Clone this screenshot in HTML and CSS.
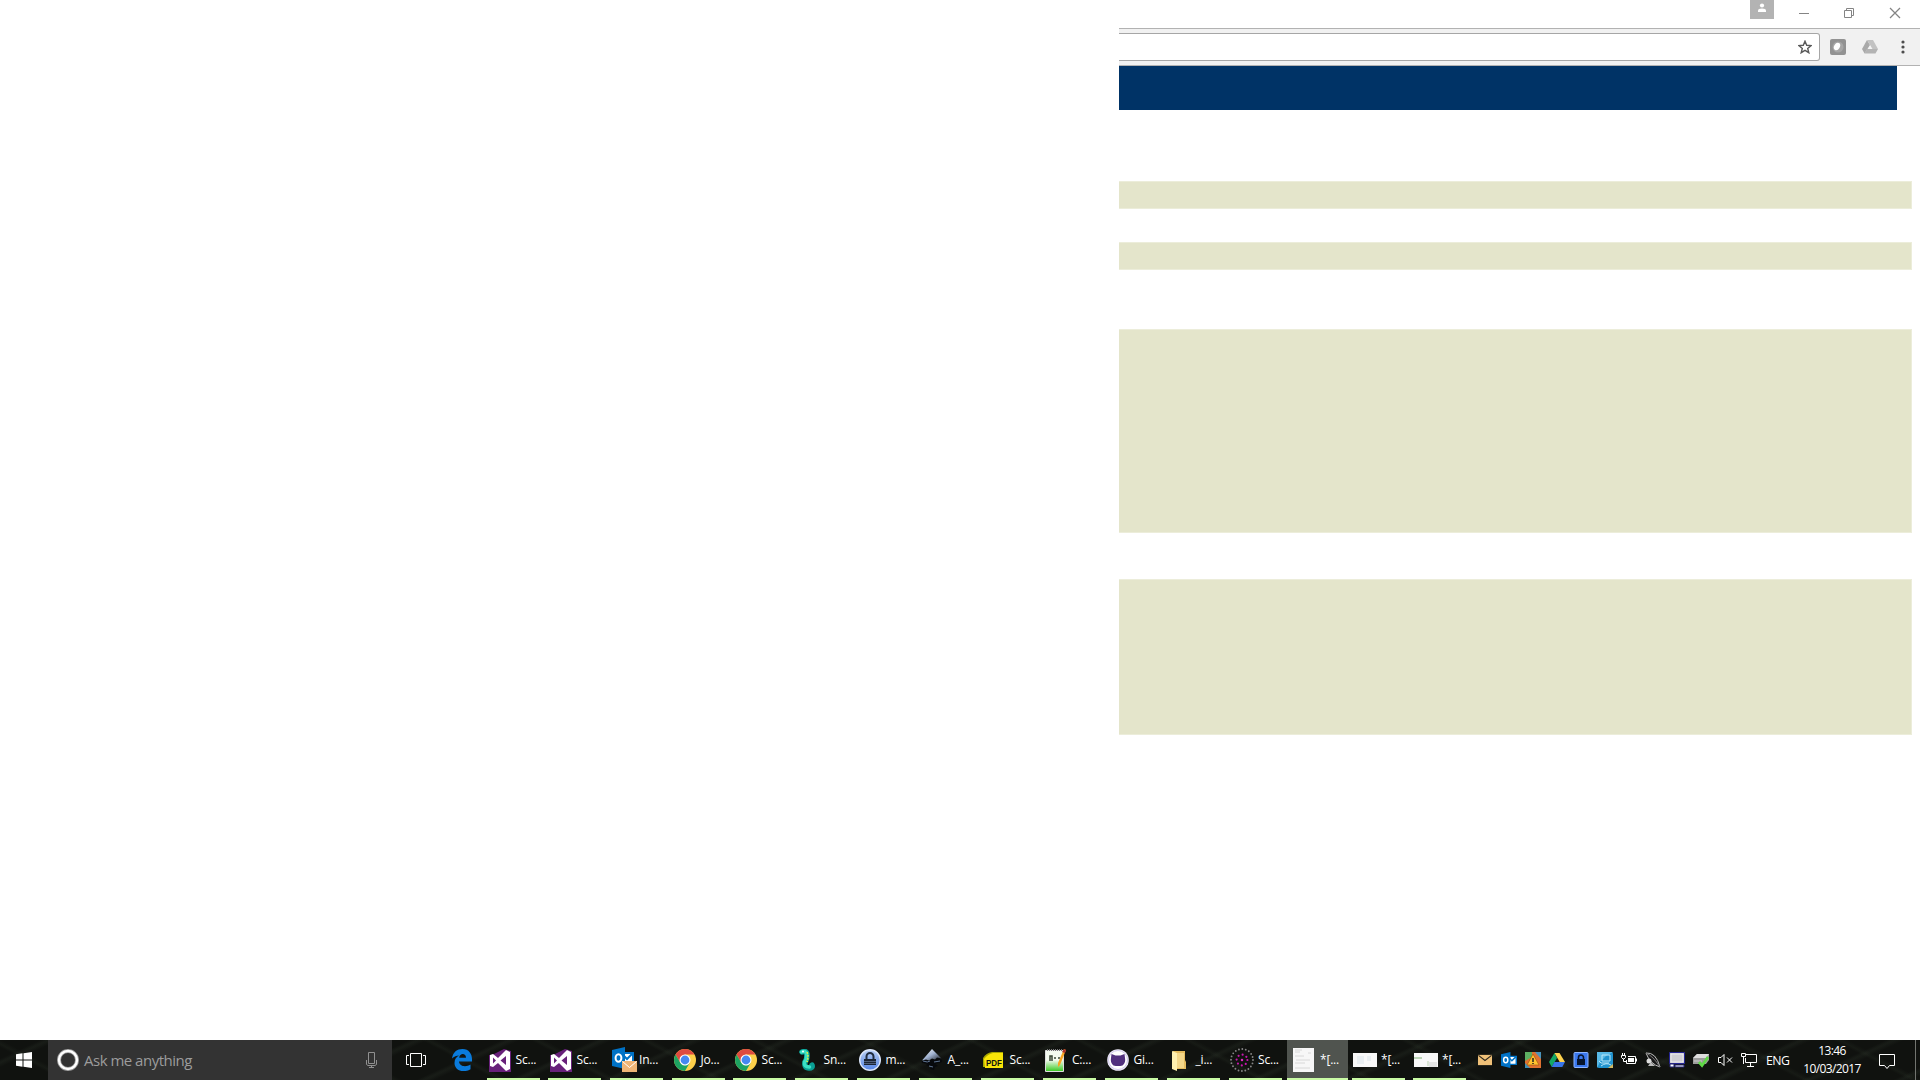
FILE: index.html
```html
<!DOCTYPE html>
<html lang="en">
<head>
<meta charset="utf-8">
<title>Desktop</title>
<link rel="stylesheet" href="styles.css">
</head>
<body>
<svg width="0" height="0" class="defs">
  <defs>
    <linearGradient id="sky" x1="0" y1="0" x2="0" y2="1"><stop offset="0" stop-color="#b9cff5"/><stop offset="1" stop-color="#5585e6"/></linearGradient>
    <linearGradient id="paper" x1="0" y1="0" x2="0" y2="1"><stop offset=".45" stop-color="#f4fbf0"/><stop offset="1" stop-color="#35c81c"/></linearGradient>
    <linearGradient id="ink" x1="0" y1="0" x2="1" y2="1"><stop offset="0" stop-color="#fff"/><stop offset=".5" stop-color="#9dafce"/><stop offset="1" stop-color="#15181e"/></linearGradient>
    <symbol id="vs" viewBox="0 0 22 24"><path fill="#68217a" d="M0 7h3L15 1l7 2v21H0z"/><path fill="#fff" fill-rule="evenodd" d="M1 7l3-1 5 4 8-8 4 2v17l-4 2-8-8-5 4-3-1zM4 9.500v6L7 12.500zM17 8v9l-5.500-4.500z"/></symbol>
    <symbol id="chrome" viewBox="0 0 22 22"><circle cx="11" cy="11" r="11" fill="#fdd04a"/><path fill="#de4b40" d="M1.500 5.500A11 11 0 0 1 20.500 5.500H11L6.300 8.300 6.300 13.700z"/><path fill="#1da362" d="M1.500 5.500A11 11 0 0 0 11 22l4.700-8.300L11 16.500 6.300 13.700z"/><circle cx="11" cy="11" r="5.500" fill="#fff"/><circle cx="11" cy="11" r="4.400" fill="#4688f1"/></symbol>
    <symbol id="outlook" viewBox="0 0 22 22"><path fill="#fff" stroke="#0072c6" stroke-width="2" d="M11 6h10v11H11z"/><path fill="none" stroke="#0072c6" stroke-width="2" d="M12 9l3 3 6-6"/><path fill="#0072c6" d="M0 3l13-3v22L0 19z"/><ellipse cx="6.500" cy="11" rx="2.900" ry="3.800" fill="none" stroke="#fff" stroke-width="2"/></symbol>
    <symbol id="mail" viewBox="0 0 15 11"><path fill="#efc078" d="M0 0h15v11H0z"/><path fill="none" stroke="#29251c" stroke-width="1.200" d="M.5.5l7 5.500 7-5.500"/></symbol>
  </defs>
</svg>
<div class="desktop">
  <main class="screen">
    <section class="browser">
      <header class="titlebar">
        <svg class="profile" viewBox="0 0 24 19"><path fill="#b3b3b3" d="M0 0h24v19H0z"/><circle cx="12" cy="5.500" r="2.100" fill="#fff"/><path fill="#fff" d="M8 12v-1.500Q8 8.500 12 8.500t4 2V12z"/></svg>
        <svg class="winctl" viewBox="0 0 120 28" fill="none" stroke="#848484"><path d="M7 13.500h10M52.500 10.500h7v7h-7zM54.500 10V8.500h7v7H60"/><path stroke-width="1.250" d="M98 8l10 10M108 8l-10 10"/></svg>
      </header>
      <div class="toolbar">
        <div class="address"><svg viewBox="0 0 14 14" class="star"><path d="M7 1.200l1.700 4.100 4.400.3-3.400 2.800 1.100 4.300L7 10.300l-3.800 2.400 1.100-4.300L.9 5.600l4.400-.3z" fill="none" stroke="#5a5a5a" stroke-width="1.400"/></svg></div>
        <svg class="ext" viewBox="0 0 16 16"><rect width="16" height="16" rx="2" fill="#929292"/><circle cx="8" cy="8" r="5.500" fill="#a6a6a6"/><ellipse cx="7" cy="7.500" rx="2.800" ry="4" fill="#fff" transform="rotate(30 7 7.500)"/></svg>
        <svg class="drive" viewBox="0 0 16 14"><path fill="#a9a9a9" d="M5 0L0 9l2.500 4.500L8 5z"/><path fill="#c2c2c2" d="M5 0h6l5 9h-5.500z"/><path fill="#b3b3b3" d="M5 9h11l-2.500 4.500h-11z"/><path fill="#f3f3f3" d="M8 5.500l2 3.500H6z"/></svg>
        <svg class="more" viewBox="0 0 4 14" fill="#4c4c4c"><circle cx="2" cy="2" r="1.600"/><circle cx="2" cy="7" r="1.600"/><circle cx="2" cy="12" r="1.600"/></svg>
      </div>
      <div class="page">
        <div class="banner"></div>
        <div class="panel first"></div>
        <div class="panel second"></div>
        <div class="panel third"></div>
        <div class="panel fourth"></div>
      </div>
    </section>
  </main>
  <footer class="taskbar">
    <button class="start"><svg viewBox="0 0 16 16" width="16" height="16" fill="#fff"><path d="M0 2.300L6.500 1.300v6.200H0zM7.500 1.200L16 0v7.500H7.500zM0 8.500h6.500v6.200L0 13.700zM7.500 8.500H16V16l-8.500-1.200z"/></svg></button>
    <div class="search">
      <svg class="cortana" viewBox="0 0 22 22"><circle cx="11" cy="11" r="9" fill="none" stroke="#999" stroke-width="4"/><circle cx="11" cy="11" r="9" fill="none" stroke="#fff" stroke-width="2.400"/></svg>
      <span>Ask me anything</span>
      <svg class="mic" viewBox="0 0 11 16" fill="none" stroke="#909090"><path d="M2.500.5h6v11h-6zM.5 8v4.500L2 13.500h7l1.500-1V8M5.500 13.500v2M3 15.500h5"/></svg>
    </div>
    <svg class="taskview" viewBox="0 0 20 14" fill="none" stroke="#fff"><path d="M4.500.5h11v13h-11zM3 2.500H.5v9H3M17 2.500h2.500v9H17"/></svg>
    <svg class="edge" viewBox="0 0 20 22"><path fill="#0a7bdc" d="M0 9.500C1 3 5 0 10.500 0 17 0 20 5 20 10v2.500H7c.3 5 7 6 11.500 3v4.700C10 25 2.500 20.500 2.500 14c0-4 2-6 4.500-7.500C4.500 6.500 2 7.500 0 9.500zM7.200 8.700H14C14 3.500 7.500 4 7.200 8.700z"/></svg>
    <nav class="apps">
      <div class="app"><svg class="i22 tall"><use href="#vs"/></svg><span>Sc...</span></div>
      <div class="app"><svg class="i22 tall"><use href="#vs"/></svg><span>Sc...</span></div>
      <div class="app"><svg class="i25" viewBox="0 0 25 25"><use href="#outlook" width="22" height="22"/><path fill="#efb576" d="M10 14h15v11H10z"/><path fill="none" stroke="#fff" d="M10.500 14.500l7 6 7-6"/></svg><span>In...</span></div>
      <div class="app"><svg class="i22"><use href="#chrome"/></svg><span>Jo...</span></div>
      <div class="app"><svg class="i22"><use href="#chrome"/></svg><span>Sc...</span></div>
      <div class="app"><svg class="i22" viewBox="0 0 22 22"><path d="M5 3q5-2 5 3t-2 7q-1 6 4 6 4 0 3-3" fill="none" stroke="#0a9f94" stroke-width="5.500" stroke-linecap="round"/><path d="M4.500 3q5-2 5 3t-2 7q-1 5 5 5" fill="none" stroke="#39e0c4" stroke-width="3.500" stroke-linecap="round"/><path d="M10 3q2 4 0 10" fill="none" stroke="#d8ed4c" stroke-width="1.600" stroke-dasharray="2 1"/><circle cx="6" cy="2.500" r="1" fill="#fff"/></svg><span>Sn...</span></div>
      <div class="app"><svg class="i22" viewBox="0 0 22 22"><circle cx="11" cy="11" r="10.300" fill="url(#sky)" stroke="#dce6fa" stroke-width="1.400"/><path d="M7.500 11V7.500a3.500 3.500 0 0 1 7 0V11" fill="none" stroke="#202c40" stroke-width="2"/><path d="M5 10h12v6H5z" fill="#1b2434"/><path d="M5 12.500h12M5 14.500h12" stroke="#7488aa" stroke-width=".6"/></svg><span>m...</span></div>
      <div class="app"><svg class="i22" viewBox="0 0 22 22"><path d="M11 1l10 10q1 3-4 3l-3 1 3 2-3 1-1 3-4-1 1-2-5-2 2-1-6-1q-1-1 0-2z" fill="#07090c"/><path d="M11 0l9.500 9.500-4.500-1-2 2-3-1-3 2-3-1-4 1z" fill="url(#ink)"/><path d="M2 12q5 2 7 0M13 13l6-1M8 17l4 1" stroke="#607694" fill="none"/></svg><span>A_...</span></div>
      <div class="app"><svg class="i22" viewBox="0 0 22 22"><path d="M0 9q3-5 9-6h11v3L2 18H0z" fill="#a8a600"/><path d="M1 10q4-5 9-6h10v15H2z" fill="#f8e508"/><text x="3" y="17" textLength="16" lengthAdjust="spacingAndGlyphs" class="pdf">PDF</text></svg><span>Sc...</span></div>
      <div class="app"><svg class="i24" viewBox="0 0 24 24"><path d="M1.500 2.500h18v21h-18z" fill="url(#paper)" stroke="#ddd"/><path d="M3 2h16" stroke="#777" stroke-width="2" stroke-dasharray="1 1"/><path d="M6 13V8h2v5M10 10h2M14 10h2" fill="none" stroke="#394734" stroke-width="1.500"/><path d="M20 1l2 1-6 15-2 2v-4z" fill="#f8a421"/><path d="M20 1l2 1-1 3-3-1z" fill="#ad312d"/></svg><span>C:...</span></div>
      <div class="app"><svg class="i22" viewBox="0 0 22 22"><circle cx="11" cy="11" r="10.800" fill="#eeeaf9"/><circle cx="11" cy="11" r="9.500" fill="#fff" stroke="#d2cbed"/><path d="M4.500 5l4 1.500h5L17.500 5l.5 4q1 5-2.500 7.500-4.500 1-9 0-3.500-2.500-2.500-7.500z" fill="#51307e"/></svg><span>Gi...</span></div>
      <div class="app"><svg class="i22" viewBox="0 0 22 22"><path d="M4 2h12v9l1 2v7H4z" fill="#e5bc5e"/><path d="M3 2l5 2v18l-5-2z" fill="#fff0b0"/><path d="M8 4h7v15H8z" fill="#f4d789"/></svg><span>_i...</span></div>
      <div class="app"><svg class="i24" viewBox="0 0 24 24" fill="none" stroke-linecap="round"><circle cx="12" cy="12" r="11" stroke="#858585" stroke-width="1.900" stroke-dasharray="0 3.456"/><circle cx="12" cy="12" r="5.400" stroke="#c618ad" stroke-width="2.200" stroke-dasharray="0 4.241"/><path d="M12 12h.01" stroke="#e02ac5" stroke-width="2.500"/></svg><span>Sc...</span></div>
      <div class="app active"><svg class="i24" viewBox="0 0 24 24"><path d="M1 0h21v24H1z" fill="#f7f7f7"/><path d="M3 2h7M3 4h5M3 8h9M4 12h14M3 15h10M3 20h15M16 5h3" stroke="#d8d8d8"/></svg><span>*[...</span></div>
      <div class="app"><svg class="i24" viewBox="0 0 24 24"><path d="M0 5h24v14H0z" fill="#f8f8f8"/><path d="M4 8h7v8H4zM14 8h4v5h-4z" fill="#e9eef1"/></svg><span>*[...</span></div>
      <div class="app"><svg class="i24" viewBox="0 0 24 24"><path d="M0 5h24v14H0z" fill="#f8f8f8"/><path d="M0 10h8" stroke="#a9caa1" stroke-width="1.500"/><path d="M14 13v5" stroke="#bbd3b3"/><path d="M15 14h8v5h-8z" fill="#e4e4e4"/></svg><span>*[...</span></div>
    </nav>
    <div class="tray">
      <svg viewBox="0 0 16 16"><use href="#mail" x="1" y="2.500" width="14" height="11"/></svg>
      <svg viewBox="0 0 16 16"><use href="#outlook" width="16" height="16"/></svg>
      <svg viewBox="0 0 16 16"><path d="M0 0h16v16H0z" fill="#df7131"/><path d="M0 0h7v5L0 9z" fill="#5caf62"/><path d="M10 0h6v7z" fill="#4a94bc"/><path d="M0 11l5 5H0z" fill="#3f8fb5"/><path d="M8 2l6 11H2z" fill="#ffc22e" stroke="#a65714" stroke-width=".7"/><path d="M8 6v4M8 11v1" stroke="#222" stroke-width="1.500"/></svg>
      <svg viewBox="0 0 16 16"><path d="M5.500 1L0 10l2.700 5L8 6z" fill="#14a765"/><path d="M5.500 1h5L16 10h-5.300z" fill="#ffd24d"/><path d="M5.400 10H16l-2.700 5H2.700z" fill="#3975e8"/></svg>
      <svg viewBox="0 0 16 16"><rect x="1" y=".5" width="14" height="15" rx="1" fill="#3b78ee" stroke="#8eb5ff"/><path d="M5.500 8V5.500a2.500 2.500 0 0 1 5 0V8" fill="none" stroke="#07152e" stroke-width="1.600"/><path d="M4 7h8v6H4z" fill="#07152e"/></svg>
      <svg viewBox="0 0 16 16"><rect width="16" height="16" rx="2" fill="#2193ce"/><path d="M0 0h16L9 4 3 10 0 16z" fill="#58b9e6"/><path d="M5 3h8v6H5zM2 9l2 2h8M4 14q5-4 10-1" fill="none" stroke="#b8e7fa"/><path d="M16 12v4h-5z" fill="#d1b861"/></svg>
      <svg viewBox="0 0 16 16" fill="none" stroke="#fff"><path d="M7 4.500h7.500v7H5.500V8M15.500 6.500v3M.5 3.500h4v2L3 7H2L.5 5.500zM1.500 1v2M3.500 1v2M2.500 7v2.500h3"/><path d="M7 6h6v4H7z" fill="#fff" stroke="none"/></svg>
      <svg viewBox="0 0 16 16"><path d="M1 1q10-1 14 14Q5 12 1 1z" fill="#181818" stroke="#bbb"/><path d="M1 1q7 3 14 14" stroke="#777" fill="none"/><circle cx="4" cy="9" r="2.500" fill="#ddd"/><path d="M3 14l3-4 4 4z" fill="#bbb"/></svg>
      <svg viewBox="0 0 16 16"><path d="M.5.500h15v11H.5z" fill="#c8c7cd" stroke="#242492"/><path d="M2 2h12v8H2z" fill="#cfced3" stroke="#fff" stroke-width=".6"/><path d="M1 12h4v3H1zM6 13h9v2H6z" fill="#fff" stroke="#252573"/></svg>
      <svg viewBox="0 0 16 16"><path d="M0 6l4-4h12v6l-3 4H0z" fill="#9c9c9c"/><path d="M0 6l4-4h12l-3 4z" fill="#ddd"/><path d="M1 9h8" stroke="#ccc"/><path d="M6 10l3 3.500L15 5" fill="none" stroke="#5fd846" stroke-width="2.800"/></svg>
      <svg viewBox="0 0 16 16" fill="none" stroke="#fff"><path d="M1.500 5.500H4l3-3v11l-3-3H1.500zM10 5.500l5 5M15 5.500l-5 5"/></svg>
      <svg viewBox="0 0 16 16" fill="none" stroke="#fff"><path d="M5 2.500h10.500v8h-11V6M9.500 11v3M6 14.500h7M.5 1.500h4v3h-4zM2.500 5v7"/></svg>
      <span class="lang">ENG</span>
      <div class="clock"><span class="time">13:46</span><span class="date">10/03/2017</span></div>
      <svg class="note" viewBox="0 0 16 16" fill="none" stroke="#fff"><path d="M.5.5h15v11h-5L8 14.500 5.500 11.500h-5z"/></svg>
    </div>
    <div class="peek"></div>
  </footer>
</div>
</body>
</html>
```
FILE: styles.css
```css
* { box-sizing: border-box; }
body { margin: 0; background: #fff; overflow: hidden; font-family: "Open Sans", "Noto Sans", sans-serif; }
svg { display: block; flex: none; }
.defs { position: absolute; }
.desktop { width: 1920px; height: 1080px; display: flex; flex-direction: column; }
.screen { flex: 1; display: flex; justify-content: flex-end; }
.browser { width: 801px; }
.titlebar { height: 28px; display: flex; justify-content: flex-end; }
.profile { width: 24px; height: 19px; margin-right: 18px; }
.winctl { width: 120px; height: 28px; margin-right: 8px; }
.toolbar { height: 38px; background: #f1f1f1; border-top: 1px solid #b2b2b2; border-bottom: 1px solid #b2b2b2; display: flex; align-items: center; }
.address { width: 701px; height: 28px; background: #fff; border: 1px solid #a6a6a6; border-left: 0; border-radius: 0 3px 3px 0; display: flex; align-items: center; justify-content: flex-end; padding-right: 7px; }
.star { width: 14px; height: 14px; }
.ext { width: 16px; height: 16px; margin-left: 10px; }
.drive { width: 16px; height: 14px; margin-left: 16px; }
.more { width: 4px; height: 14px; margin-left: 23px; }
.page { padding-right: 8px; }
.banner { width: 778px; height: 44px; background: #003366; }
.panel { background: #e4e5cb; border: 1px solid #ecedda; border-left: 0; }
.first { margin-top: 71px; height: 28px; }
.second { margin-top: 33px; height: 28px; }
.third { margin-top: 59px; height: 204px; }
.fourth { margin-top: 46px; height: 156px; }
.taskbar { height: 40px; flex: none; display: flex; color: #fff; background: repeating-linear-gradient(155deg, transparent 0 17px, rgba(75,90,72,.13) 20px 21px, transparent 25px 39px), repeating-linear-gradient(28deg, transparent 0 29px, rgba(70,85,65,.12) 32px, transparent 36px 51px), #10120f; }
.start { width: 48px; border: 0; padding: 0 0 0 16px; background: none; }
.search { width: 344px; background: #333; display: flex; align-items: center; padding: 0 15px 0 9px; color: #9c9c9c; font-size: 15px; }
.cortana { width: 22px; height: 22px; margin-right: 5px; }
.search span { letter-spacing: -.5px; white-space: nowrap; }
.mic { width: 11px; height: 16px; margin-left: auto; }
.taskview { width: 20px; height: 14px; margin: 13px 0 0 14px; }
.edge { width: 20px; height: 22px; margin: 9px 0 0 26px; }
.apps { width: 994px; margin-left: 11px; display: grid; grid-template-columns: 61px 62px 62px 61px repeat(9, 62px) 61px 61px 68px; }
.app { width: 61px; height: 40px; padding: 0 0 1px 6px; display: flex; align-items: center; background: linear-gradient(#c9fba5, #c9fba5) 4px 38px / 53px 2px no-repeat; font-size: 12px; white-space: nowrap; }
.app svg { margin-right: 4.5px; }
.app span { letter-spacing: -.2px; }
.app.active { background: linear-gradient(#c9fba5, #c9fba5) 0 38px / 61px 2px no-repeat, #50544f; }
.i22 { width: 22px; height: 22px; }
.i22.tall { height: 24px; }
.app .i24 { width: 24px; height: 24px; margin: 0 4px 0 -1px; }
.app .i25 { width: 25px; height: 25px; margin-right: 2px; }
.pdf { font: bold 9px "Liberation Sans", sans-serif; fill: #111; }
.tray { flex: 1; display: flex; align-items: center; }
.tray > svg { width: 16px; height: 16px; margin-right: 8px; }
.lang { width: 27px; padding-left: 1px; font-size: 12.3px; letter-spacing: -.5px; }
.clock { width: 80px; display: flex; flex-direction: column; align-items: center; font-size: 12px; line-height: 18px; letter-spacing: -.6px; }
.tray > .note { margin: 3px 0 0 7px; }
.peek { width: 5px; border-left: 1px solid #72746f; }
```
